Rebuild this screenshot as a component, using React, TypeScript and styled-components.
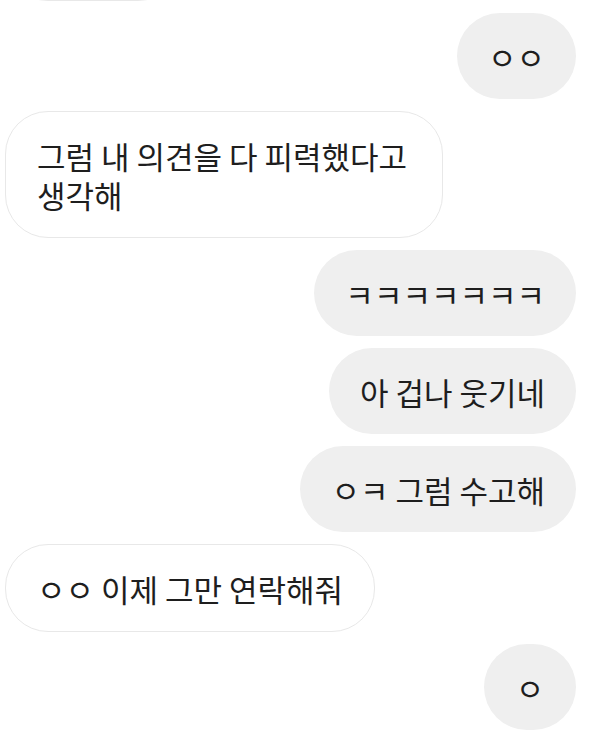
import React from "react";
import styled, { createGlobalStyle } from "styled-components";

const GlobalStyle = createGlobalStyle`
  html, body {
    margin: 0;
    padding: 0;
    background: #ffffff;
  }
  body {
    font-family: "Noto Sans CJK KR", "Noto Sans", sans-serif;
    overflow: hidden;
  }
`;

const Thread = styled.div`
  display: flex;
  flex-direction: column;
  gap: 12px;
  padding: 0 28px 0 5px;
  margin-top: -87px;
`;

const Row = styled.div<{ $mine: boolean }>`
  display: flex;
  justify-content: ${(p) => (p.$mine ? "flex-end" : "flex-start")};
`;

const Bubble = styled.div<{ $mine: boolean }>`
  box-sizing: border-box;
  max-width: 438px;
  min-width: 92px;
  padding: 23.5px 31px;
  border-radius: 43px;
  font-size: 31px;
  line-height: 39px;
  color: #1e1e1e;
  text-align: ${(p) => (p.$mine ? "center" : "left")};
  background: ${(p) => (p.$mine ? "#efefef" : "#ffffff")};
  border: ${(p) => (p.$mine ? "none" : "1.5px solid #e8e8e8")};
  word-break: keep-all;
`;

const GhostBubble = styled.div`
  box-sizing: border-box;
  width: 176px;
  height: 88px;
  border-radius: 43px;
  background: #ffffff;
  border: 1.5px solid #e8e8e8;
`;

type Msg = { text: string; mine: boolean };

const messages: Msg[] = [
  { text: "ㅇㅇ", mine: true },
  { text: "그럼 내 의견을 다 피력했다고 생각해", mine: false },
  { text: "ㅋㅋㅋㅋㅋㅋㅋ", mine: true },
  { text: "아 겁나 웃기네", mine: true },
  { text: "ㅇㅋ 그럼 수고해", mine: true },
  { text: "ㅇㅇ 이제 그만 연락해줘", mine: false },
  { text: "ㅇ", mine: true },
];

export default function App() {
  return (
    <>
      <GlobalStyle />
      <Thread>
        <Row $mine={false}>
          <GhostBubble />
        </Row>
        {messages.map((m, i) => (
          <Row key={i} $mine={m.mine}>
            <Bubble $mine={m.mine}>{m.text}</Bubble>
          </Row>
        ))}
      </Thread>
    </>
  );
}
